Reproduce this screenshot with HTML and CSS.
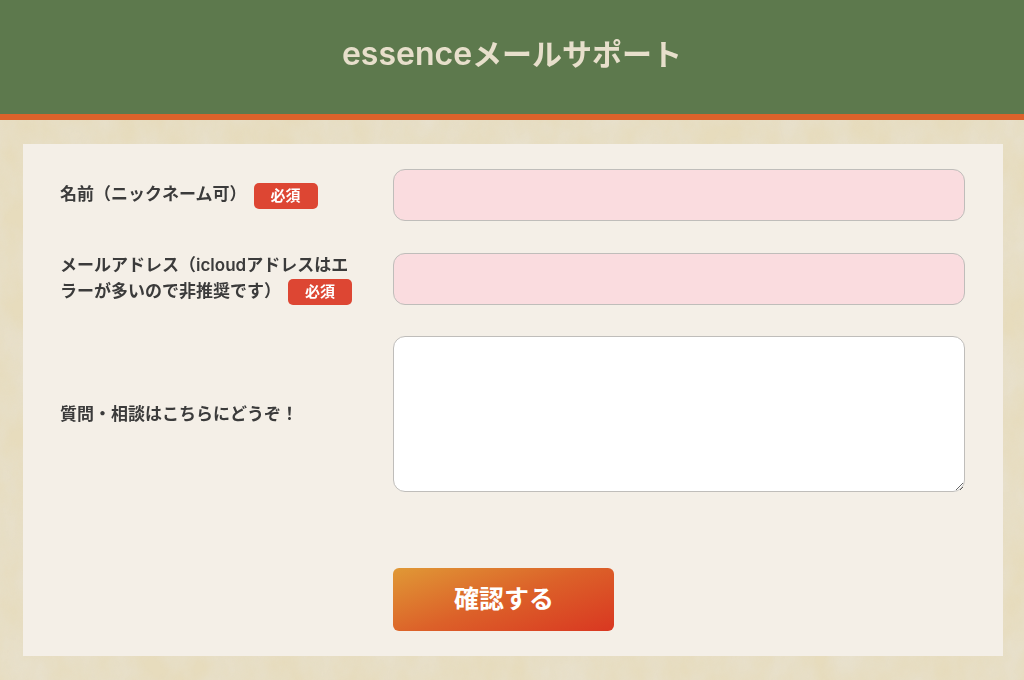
FILE: index.html
```html
<!DOCTYPE html>
<html lang="ja">
<head>
<meta charset="utf-8">
<meta name="viewport" content="width=device-width, initial-scale=1">
<title>essenceメールサポート</title>
<link rel="stylesheet" href="styles.css">
</head>
<body>
<svg class="paper" aria-hidden="true">
  <filter id="grain" x="0" y="0" width="100%" height="100%">
    <feTurbulence type="fractalNoise" baseFrequency="0.03 0.02" numOctaves="6" seed="4"/>
    <feColorMatrix values="0 0 0 0 0.81  0 0 0 0 0.79  0 0 0 0 0.75  1.4 0 0 0 -0.3"/>
  </filter>
  <rect width="100%" height="100%" filter="url(#grain)"/>
</svg>
<header class="site-header">
  <h1 class="title"><span class="title-latin">essence</span>メールサポート</h1>
</header>
<main class="panel">
  <form class="form">
    <label class="label" for="name">名前（ニックネーム可）<span class="badge">必須</span></label>
    <input class="field required" id="name" type="text" required>
    <label class="label" for="email">メールアドレス（icloudアドレスはエラーが多いので非推奨です）<span class="badge">必須</span></label>
    <input class="field required" id="email" type="email" required>
    <label class="label" for="message">質問・相談はこちらにどうぞ！</label>
    <textarea class="field message" id="message"></textarea>
    <div class="actions"><button class="submit" type="submit">確認する</button></div>
  </form>
</main>
</body>
</html>
```
FILE: styles.css
```css
* {
  box-sizing: border-box;
}

body {
  margin: 0;
  min-height: 100vh;
  background: #e7dcbd;
  color: #3b3b3b;
  font-family: Inter, "Noto Sans CJK JP", sans-serif;
}

.paper {
  position: fixed;
  inset: 0;
  z-index: -1;
  width: 100%;
  height: 100%;
  opacity: 0.5;
}

.site-header {
  padding: 30px 24px 36px;
  border-bottom: 6px solid #dc622b;
  background: #5d794d;
  text-align: center;
}

.title {
  margin: 0;
  color: #e7dfcb;
  font-size: 30px;
  font-weight: 600;
  line-height: 48px;
}

.title-latin {
  font-size: 32px;
}

.panel {
  margin: 24px 21px 24px 23px;
  padding: 25px 38px 25px 37px;
  background: #f4efe7;
}

.form {
  display: grid;
  grid-template-columns: 34fr 66fr;
  gap: 31px 39px;
  align-items: center;
}

.label {
  font-size: 17px;
  font-weight: 600;
  line-height: 26px;
}

.badge {
  display: inline-block;
  width: 64px;
  margin-left: 7px;
  border-radius: 5px;
  background: #dd4633;
  color: #fff;
  font-size: 15px;
  font-weight: 700;
  line-height: 26px;
  text-align: center;
  vertical-align: middle;
}

.field {
  display: block;
  width: 100%;
  height: 52px;
  margin: 0;
  padding: 12px;
  border: 1px solid #bfbdba;
  border-radius: 12px;
  background: #fff;
  color: inherit;
  font: inherit;
  font-size: 17px;
}

.required {
  background: #fadcdf;
}

.message {
  height: 156px;
  resize: both;
}

.actions {
  grid-column: 2;
  margin-top: 45px;
}

.submit {
  display: block;
  width: 221px;
  height: 63px;
  padding: 0 0 6px;
  border: 0;
  border-radius: 6px;
  background: linear-gradient(160deg, #e09936 0%, #dc6129 50%, #d93721 100%);
  color: #fff;
  font-family: inherit;
  font-size: 25px;
  font-weight: 700;
  cursor: pointer;
}
```
